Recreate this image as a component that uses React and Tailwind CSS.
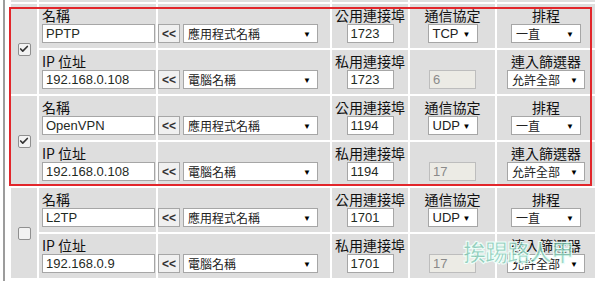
import { Check } from 'lucide-react';

const RECORDS = [
  { on: true, name: 'PPTP', ip: '192.168.0.108', pub: '1723', priv: '1723', proto: 'TCP', num: '6' },
  { on: true, name: 'OpenVPN', ip: '192.168.0.108', pub: '1194', priv: '1194', proto: 'UDP', num: '17' },
  { on: false, name: 'L2TP', ip: '192.168.0.9', pub: '1701', priv: '1701', proto: 'UDP', num: '17' },
];

const cjk = "font-['Noto_Sans_CJK_TC','Noto_Sans',sans-serif]";
const latin = "font-['Liberation_Sans','Noto_Sans_CJK_TC',sans-serif]";
const cols = 'grid grid-cols-[26px_117px_172px_76px_85px_98px] gap-[2px]';

export default function App() {
  return (
    <div className="w-[600px] h-[281px] overflow-hidden bg-white flex">
      <div className="w-[3px] shrink-0" />
      <div className="w-[2px] shrink-0 bg-[#9c9c9c]" />
      <div className="w-[6px] shrink-0" />

      <div className="relative flex flex-col gap-[2px]">
        {/* tail of the record above */}
        <div className={`${cols} h-[2px]`}>
          {[0, 1, 2, 3, 4, 5].map(i => <div key={i} className="bg-[#dedede]" />)}
        </div>

        {RECORDS.map((r, i) => <Record key={i} r={r} />)}

        {/* highlight frame */}
        <div className="absolute left-[-2px] top-[7px] w-[583px] h-[179px] border-2 border-[#e2262b] pointer-events-none" />

        {/* watermark */}
        <div className={`absolute left-[452px] top-[240px] text-[23px] leading-none font-bold tracking-[-1px] text-[#7cc9b3]/75 [-webkit-text-stroke:1px_#f0fffa] ${cjk} pointer-events-none`}>
          挨踢路人甲
        </div>
      </div>
    </div>
  );
}

function Record({ r }) {
  return (
    <div className={`${cols} grid-rows-[44px_44px]`}>
      <div className="row-span-2 bg-[#dedede] flex items-center justify-center">
        <CheckBox on={r.on} />
      </div>

      {/* first line */}
      <Cell label="名稱" align="start">
        <TextBox value={r.name} className="ml-[3px] w-[113px]" />
      </Cell>
      <div className="bg-[#dedede] flex items-end pb-[5px]">
        <PickBtn />
        <Select text="應用程式名稱" className="ml-[3px] w-[135px]" />
      </div>
      <Cell label="公用連接埠">
        <TextBox value={r.pub} className="w-[47px]" />
      </Cell>
      <Cell label="通信協定">
        <Select text={r.proto} latinText className="w-[50px]" />
      </Cell>
      <Cell label="排程">
        <Select text="一直" className="w-[70px]" />
      </Cell>

      {/* second line */}
      <Cell label="IP 位址" align="start">
        <TextBox value={r.ip} className="ml-[3px] w-[113px]" />
      </Cell>
      <div className="bg-[#dedede] flex items-end pb-[5px]">
        <PickBtn />
        <Select text="電腦名稱" className="ml-[3px] w-[135px]" />
      </div>
      <Cell label="私用連接埠">
        <TextBox value={r.priv} className="w-[47px]" />
      </Cell>
      <Cell label="">
        <TextBox value={r.num} disabled className="w-[47px]" />
      </Cell>
      <Cell label="連入篩選器">
        <Select text="允許全部" className="w-[78px]" />
      </Cell>
    </div>
  );
}

function Cell({ label, align = 'center', children }) {
  return (
    <div className={`bg-[#dedede] flex flex-col justify-end pb-[5px] ${align === 'start' ? 'items-start' : 'items-center'}`}>
      <div className={`text-[14px] leading-[18px] h-[18px] text-[#111] ${cjk} ${align === 'start' ? 'ml-[3px]' : ''}`}>{label}</div>
      {children}
    </div>
  );
}

function TextBox({ value, disabled, className = '' }) {
  return (
    <div className={`h-[19px] border border-[#a6a6a6] px-[3px] flex items-center text-[13px] ${latin} ${disabled ? 'bg-[#ecebe5] text-[#8a8a8a] border-[#bdbdbd]' : 'bg-white text-[#1f2a1f]'} ${className}`}>
      {value}
    </div>
  );
}

function Select({ text, latinText, className = '' }) {
  return (
    <div className={`h-[19px] border border-[#a6a6a6] bg-white pl-[4px] pr-[6px] flex items-center justify-between ${className}`}>
      <span className={`${latinText ? `text-[13px] ${latin}` : `text-[12px] ${cjk}`} text-[#222] leading-none`}>{text}</span>
      <span className="text-[8px] leading-none text-black">▼</span>
    </div>
  );
}

function PickBtn() {
  return (
    <div className={`h-[19px] w-[22px] border border-[#a6a6a6] bg-[#f0f0f0] flex items-center justify-center text-[12px] font-bold text-[#333] ${latin}`}>
      &lt;&lt;
    </div>
  );
}

function CheckBox({ on }) {
  return (
    <div className="w-[13px] h-[13px] border border-[#8f8f8f] rounded-[2px] bg-[#f2f2f2] flex items-center justify-center">
      {on && <Check className="w-[10px] h-[10px] text-[#333]" strokeWidth={4} />}
    </div>
  );
}
